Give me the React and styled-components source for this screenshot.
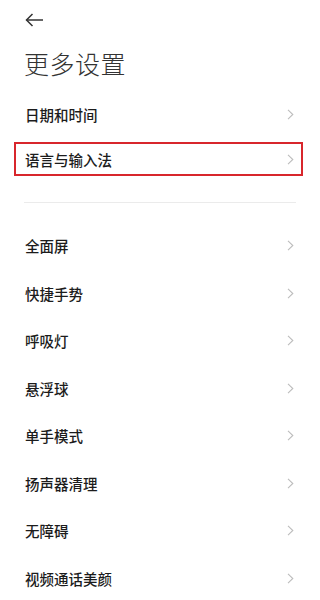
import React from "react";
import styled, { createGlobalStyle } from "styled-components";

const GlobalStyle = createGlobalStyle`
  body {
    margin: 0;
    background: #ffffff;
    font-family: "Noto Sans CJK SC", "Noto Sans", sans-serif;
  }
`;

const Page = styled.div`
  width: 320px;
  height: 600px;
  overflow: hidden;
  background: #ffffff;
  padding: 0 24px;
  box-sizing: border-box;
`;

const TopBar = styled.div`
  height: 40px;
  display: flex;
  align-items: center;
  margin-left: 1px;
`;

const BackButton = styled.button`
  border: none;
  background: none;
  padding: 0;
  display: flex;
  align-items: center;
  cursor: pointer;
`;

const Title = styled.h1`
  margin: 6px 0 12px;
  font-size: 25px;
  line-height: 34px;
  font-weight: 300;
  color: #333333;
  letter-spacing: 0.5px;
`;

const Section = styled.div`
  display: flex;
  flex-direction: column;
`;

const Row = styled.div`
  position: relative;
  height: ${(p) => p.$height}px;
  display: flex;
  align-items: center;
  justify-content: space-between;

  ${(p) =>
    p.$highlight &&
    `
    &::after {
      content: "";
      position: absolute;
      left: -10px;
      right: -7px;
      top: 5px;
      bottom: 6px;
      border: 2px solid #d8262c;
      pointer-events: none;
    }
  `}
`;

const Label = styled.span`
  font-size: 14.5px;
  font-weight: 500;
  color: #1c1c1c;
  margin-left: 1px;
`;

const Divider = styled.div`
  height: 1px;
  background: #ebebeb;
  margin: 20px 0 19px;
`;

const Chevron = () => (
  <svg width="7" height="11" viewBox="0 0 7 11" style={{ marginRight: 2 }}>
    <polyline
      points="1,0.8 5.8,5.5 1,10.2"
      fill="none"
      stroke="#bdbdbd"
      strokeWidth="1.1"
    />
  </svg>
);

const BackArrow = () => (
  <svg width="19" height="14" viewBox="0 0 19 14">
    <line x1="1.5" y1="7" x2="18" y2="7" stroke="#333" strokeWidth="1.5" />
    <polyline
      points="7.5,1 1.5,7 7.5,13"
      fill="none"
      stroke="#333"
      strokeWidth="1.5"
    />
  </svg>
);

const topItems = [{ label: "日期和时间" }, { label: "语言与输入法", highlight: true }];

const bottomItems = [
  "全面屏",
  "快捷手势",
  "呼吸灯",
  "悬浮球",
  "单手模式",
  "扬声器清理",
  "无障碍",
  "视频通话美颜",
];

const App = () => {
  return (
    <>
      <GlobalStyle />
      <Page>
        <TopBar>
          <BackButton aria-label="返回">
            <BackArrow />
          </BackButton>
        </TopBar>
        <Title>更多设置</Title>
        <Section>
          {topItems.map((item) => (
            <Row key={item.label} $height={45} $highlight={item.highlight}>
              <Label>{item.label}</Label>
              <Chevron />
            </Row>
          ))}
        </Section>
        <Divider />
        <Section>
          {bottomItems.map((label) => (
            <Row key={label} $height={47.5}>
              <Label>{label}</Label>
              <Chevron />
            </Row>
          ))}
        </Section>
      </Page>
    </>
  );
};

export default App;
